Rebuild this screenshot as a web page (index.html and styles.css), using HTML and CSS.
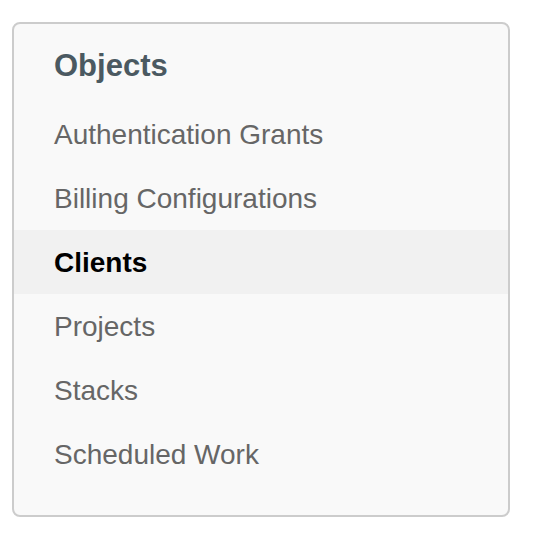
FILE: index.html
```html
<!DOCTYPE html>
<html lang="en">
<head>
  <meta charset="UTF-8">
  <title>Objects</title>
  <link rel="stylesheet" href="styles.css">
</head>
<body>
  <div class="panel">
    <h2 class="panel-title">Objects</h2>
    <ul class="nav">
      <li class="nav-item">Authentication Grants</li>
      <li class="nav-item">Billing Configurations</li>
      <li class="nav-item active">Clients</li>
      <li class="nav-item">Projects</li>
      <li class="nav-item">Stacks</li>
      <li class="nav-item">Scheduled Work</li>
    </ul>
  </div>
</body>
</html>
```

FILE: styles.css
```css
body {
  margin: 0;
  padding: 22px 0 0 12px;
  background: #fff;
  font-family: "Liberation Sans", Arial, sans-serif;
}

.panel {
  width: 494px;
  background-color: #f9f9f9;
  border: 2px solid #cccccc;
  border-radius: 8px;
  padding: 22px 0 29px 0;
}

.panel-title {
  margin: 0 0 16px 0;
  padding-left: 40px;
  font-size: 31px;
  line-height: 40px;
  font-weight: bold;
  color: #4b5961;
}

.nav {
  list-style: none;
  margin: 0;
  padding: 0;
}

.nav-item {
  padding-left: 40px;
  height: 64px;
  line-height: 65px;
  font-size: 28px;
  color: #666666;
}

.nav-item.active {
  background-color: #f1f1f1;
  color: #000;
  font-weight: bold;
}
```
